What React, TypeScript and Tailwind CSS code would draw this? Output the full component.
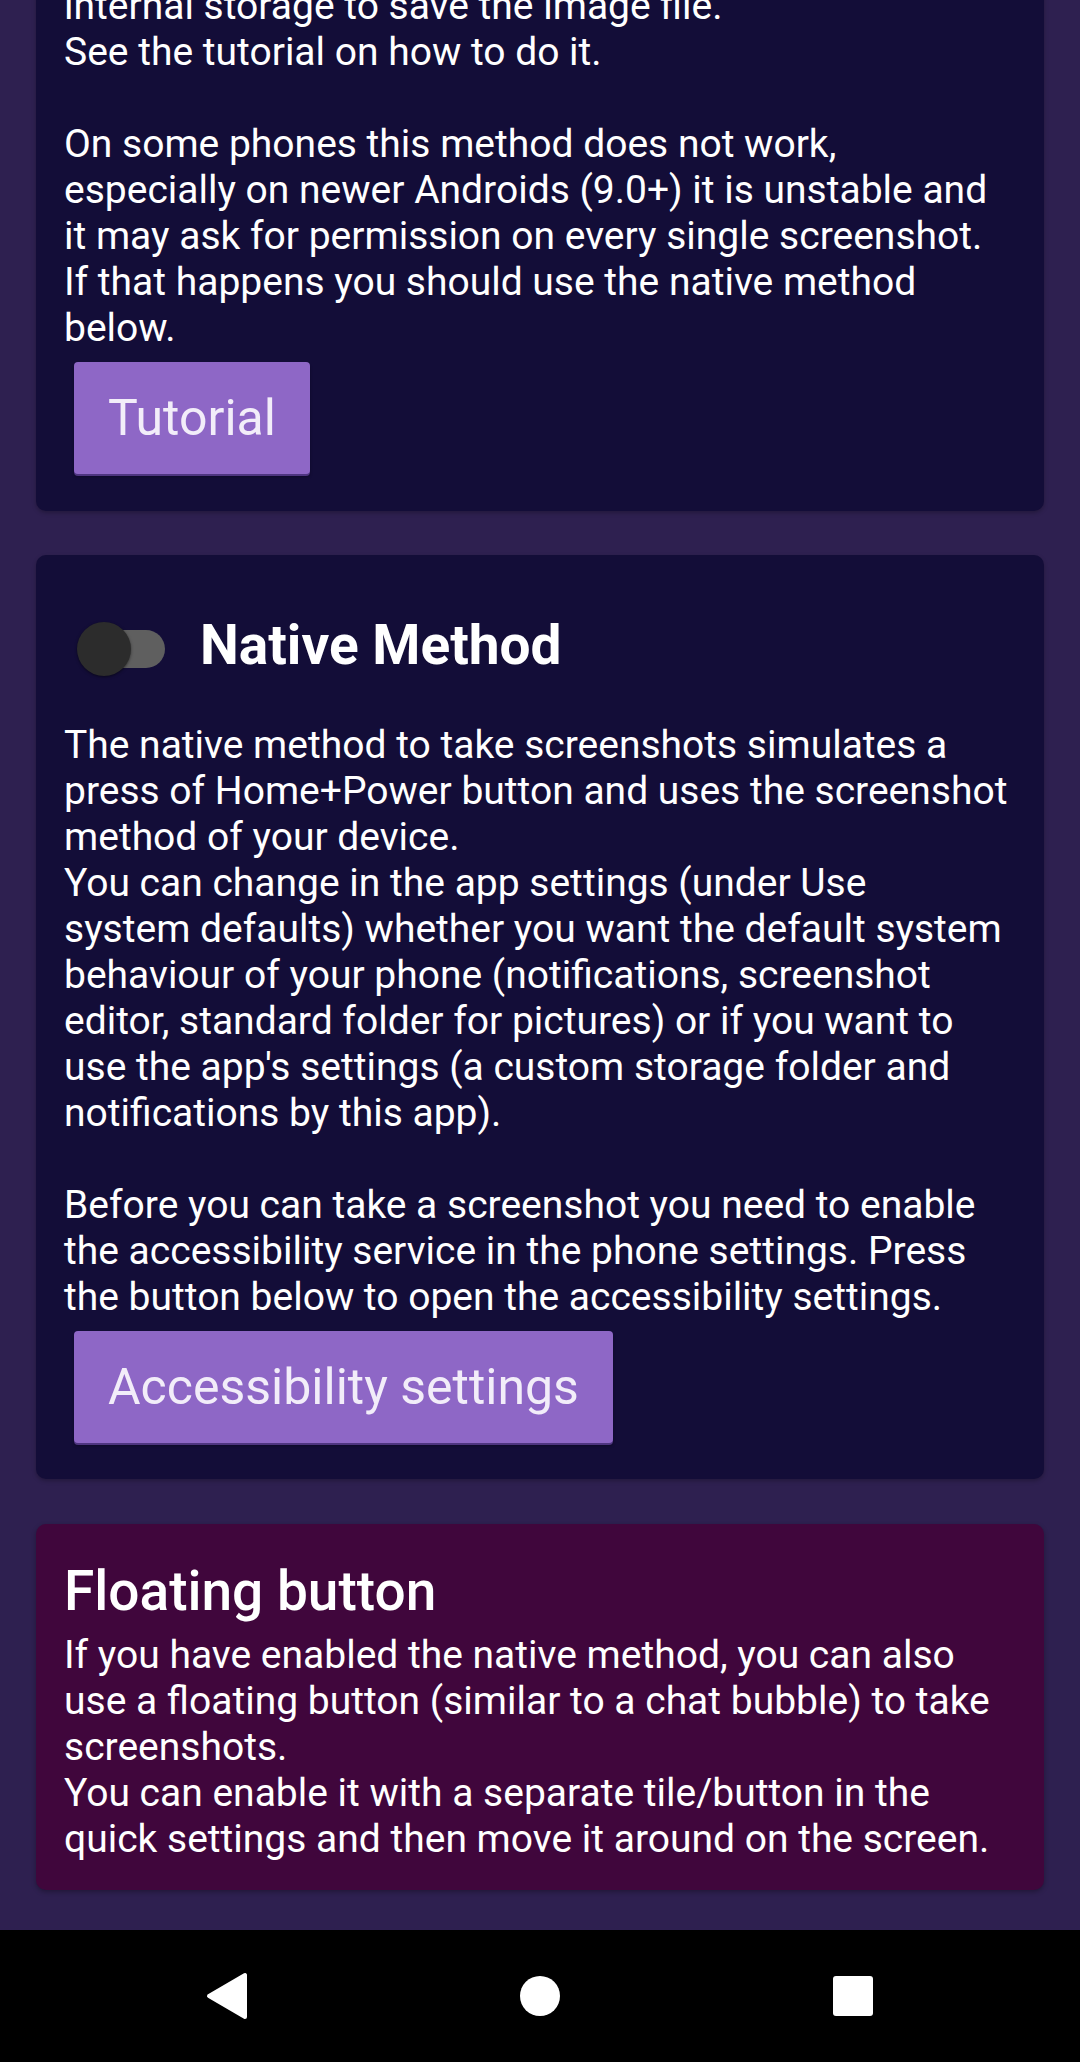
import React from 'react';

const Lines: React.FC<{ lines: string[] }> = ({ lines }) => (
    <div className="text-[39px] leading-[46px] text-white">
        {lines.map((l, i) => (
            <div key={i} className="whitespace-nowrap h-[46px]">{l}</div>
        ))}
    </div>
);

const PurpleButton: React.FC<{ label: string }> = ({ label }) => (
    <div className="ml-[10px] mt-[11px] self-start">
        <button className="h-[112px] px-[34px] rounded-[4px] bg-[#8e67c6] text-[#f2edf9] text-[50px] shadow-[0_2px_0_#4e3580,0_3px_3px_rgba(0,0,0,0.3)]">
            {label}
        </button>
    </div>
);

const Toggle: React.FC = () => (
    <div className="relative w-[88px] h-[54px] ml-[13px] mt-[8px] shrink-0">
        <div className="absolute right-0 top-[8px] h-[38px] w-[80px] rounded-full bg-[#5f5f5f]" />
        <div className="absolute left-0 top-0 w-[54px] h-[54px] rounded-full bg-[#2c2c2c] shadow-[0_1px_3px_rgba(0,0,0,0.5)]" />
    </div>
);

const tutorialText = [
    'internal storage to save the image file.',
    'See the tutorial on how to do it.',
    '',
    'On some phones this method does not work,',
    'especially on newer Androids (9.0+) it is unstable and',
    'it may ask for permission on every single screenshot.',
    'If that happens you should use the native method',
    'below.',
];

const nativeText = [
    'The native method to take screenshots simulates a',
    'press of Home+Power button and uses the screenshot',
    'method of your device.',
    'You can change in the app settings (under Use',
    'system defaults) whether you want the default system',
    'behaviour of your phone (notifications, screenshot',
    "editor, standard folder for pictures) or if you want to",
    "use the app's settings (a custom storage folder and",
    'notifications by this app).',
    '',
    'Before you can take a screenshot you need to enable',
    'the accessibility service in the phone settings. Press',
    'the button below to open the accessibility settings.',
];

const floatingText = [
    'If you have enabled the native method, you can also',
    'use a floating button (similar to a chat bubble) to take',
    'screenshots.',
    'You can enable it with a separate tile/button in the',
    'quick settings and then move it around on the screen.',
];

export default function App() {
    return (
        <div className="w-[1080px] h-[2062px] overflow-hidden flex flex-col bg-[#2e2050] font-['Roboto',sans-serif]">
            <div className="flex-1 overflow-hidden">
                <div className="px-[36px] flex flex-col -mt-[45px]">
                    {/* screenshot method card (scrolled) */}
                    <div className="bg-[#130d38] rounded-[10px] pt-[28px] pb-[37px] px-[28px] flex flex-col shadow-[0_2px_4px_rgba(0,0,0,0.25)]">
                        <Lines lines={tutorialText} />
                        <PurpleButton label="Tutorial" />
                    </div>

                    <div className="mt-[44px] bg-[#130d38] rounded-[10px] pt-[50px] pb-[36px] px-[28px] flex flex-col shadow-[0_2px_4px_rgba(0,0,0,0.25)]">
                        <div className="flex items-center h-[80px]">
                            <Toggle />
                            <span className="ml-[35px] text-[55px] font-bold text-white leading-none">Native Method</span>
                        </div>
                        <div className="mt-[37px]">
                            <Lines lines={nativeText} />
                        </div>
                        <PurpleButton label="Accessibility settings" />
                    </div>

                    <div className="mt-[45px] bg-[#40063c] rounded-[10px] pt-[36px] pb-[28px] px-[28px] flex flex-col shadow-[0_2px_5px_rgba(0,0,0,0.3)]">
                        <div className="text-[55px] leading-[63px] font-medium text-white">Floating button</div>
                        <div className="mt-[9px]">
                            <Lines lines={floatingText} />
                        </div>
                    </div>
                </div>
            </div>

            <nav className="h-[132px] shrink-0 bg-black flex items-center justify-center">
                <div className="w-[313px] flex justify-center">
                    <svg width="42" height="48" viewBox="0 0 42 48">
                        <polygon points="3,24 39,3 39,45" fill="#fff" stroke="#fff" strokeWidth="4" strokeLinejoin="round" />
                    </svg>
                </div>
                <div className="w-[313px] flex justify-center">
                    <div className="w-[40px] h-[40px] rounded-full bg-white" />
                </div>
                <div className="w-[313px] flex justify-center">
                    <div className="w-[40px] h-[40px] rounded-[3px] bg-white" />
                </div>
            </nav>
        </div>
    );
}
